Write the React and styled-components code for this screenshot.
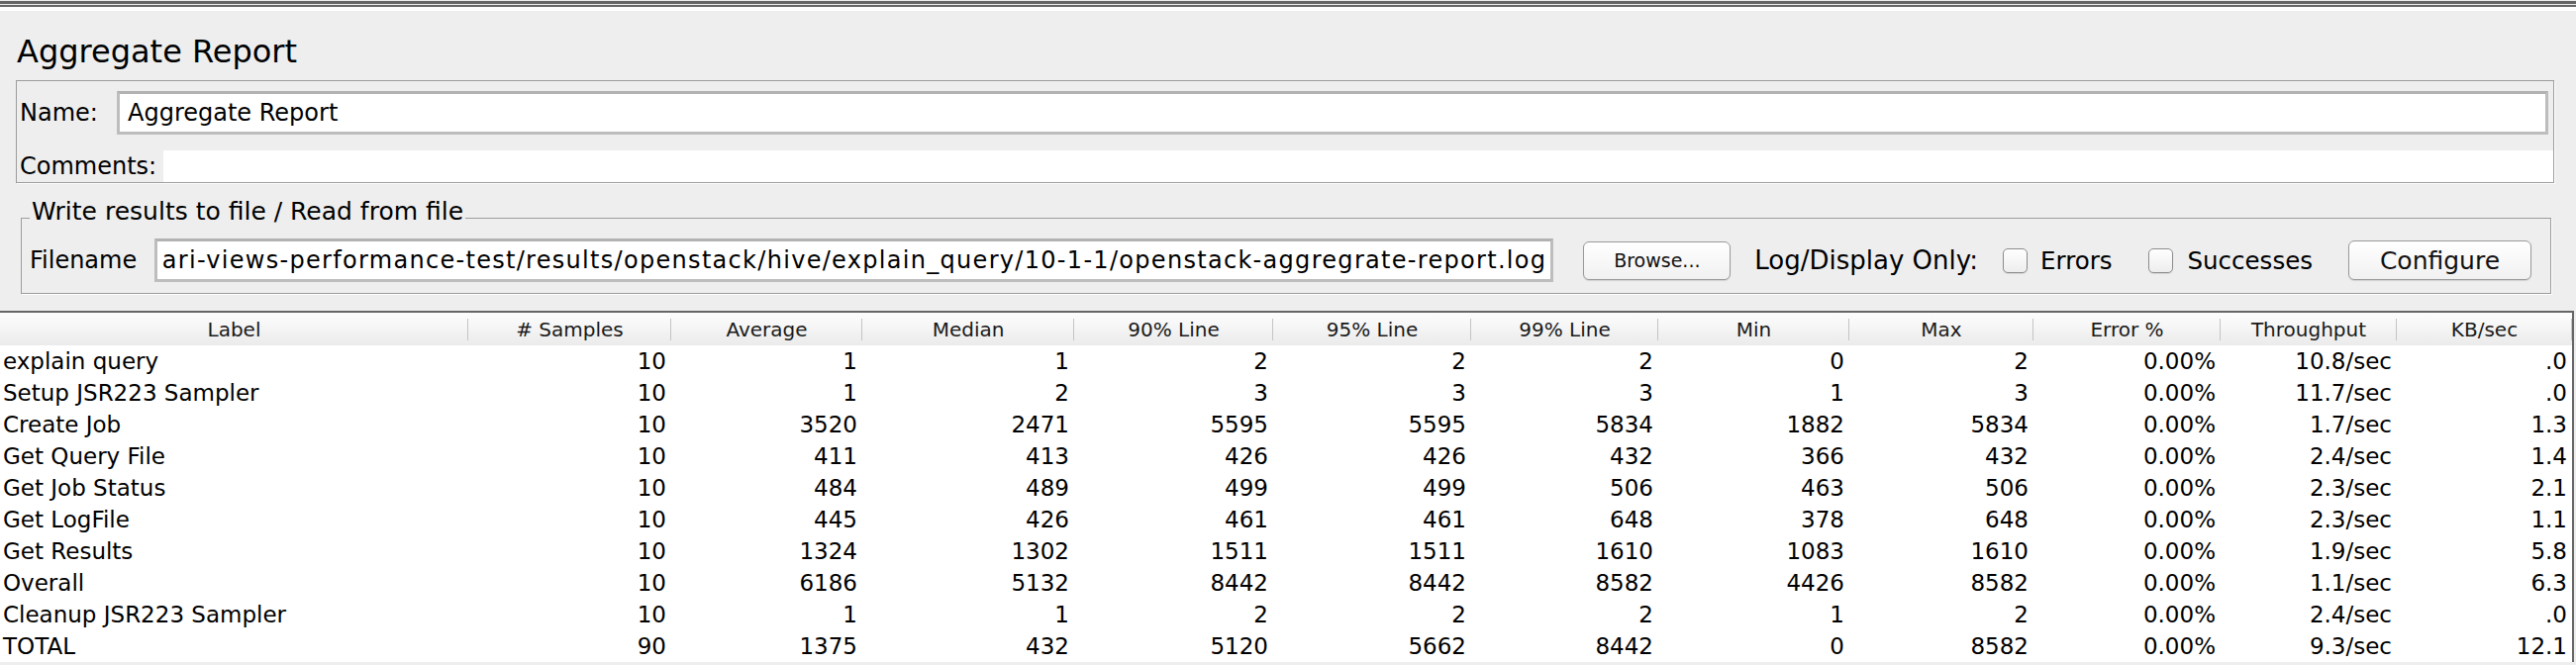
import styled, { createGlobalStyle } from 'styled-components'

const Global = createGlobalStyle`
  html, body {
    margin: 0;
    padding: 0;
    background: #eeeeee;
    overflow: hidden;
  }
  body {
    font-family: "DejaVu Sans", "Liberation Sans", sans-serif;
    color: #000;
  }
`

const Window = styled.div`
  width: 2602px;
  height: 672px;
  padding-top: 1px;
  box-sizing: border-box;
  overflow: hidden;
`

const TopRule = styled.div`
  height: 1px;
  border-top: 3px solid #666666;
  border-bottom: 2px solid #666666;
  box-shadow: 0 4px 0 #ffffff;
`

const Title = styled.h1`
  margin: 27px 0 0 17px;
  font-size: 32px;
  line-height: 37px;
  font-weight: normal;
`

const NamePanel = styled.div`
  margin: 10px 22px 0 16px;
  padding: 10px 0 0 3px;
  border: 1px solid #9d9d9d;
  box-shadow: 1px 1px 0 #ffffff;
`

const Row = styled.div`
  display: flex;
  align-items: center;
  height: ${(p) => p.$height || 44}px;
  margin-bottom: ${(p) => p.$gap || 0}px;
  padding-right: ${(p) => p.$right || 0}px;
`

const FieldLabel = styled.span`
  flex: none;
  width: ${(p) => (p.$width ? `${p.$width}px` : 'auto')};
  font-size: ${(p) => p.$size || 24}px;
  margin-left: ${(p) => p.$left || 0}px;
  white-space: nowrap;
`

const TextField = styled.div`
  flex: 1;
  min-width: 0;
  height: 44px;
  box-sizing: border-box;
  display: flex;
  align-items: center;
  justify-content: ${(p) => (p.$end ? 'flex-end' : 'flex-start')};
  overflow: hidden;
  padding: 0 ${(p) => (p.$end ? 4 : 8)}px;
  background: #fff;
  border: 3px solid #bdbdbd;
  border-top-color: #b2b2b2;
  font-size: 24px;
  letter-spacing: ${(p) => p.$spacing || 0}px;
  white-space: nowrap;
`

const CommentArea = styled.div`
  flex: 1;
  align-self: stretch;
  background: #fff;
`

const FilePanel = styled.fieldset`
  margin: 14px 25px 0 21px;
  padding: 0 19px 11px 8px;
  border: 1px solid #9d9d9d;
  box-shadow: 1px 1px 0 #ffffff;
  min-inline-size: 0;
`

const Legend = styled.legend`
  padding: 0 2px 13px;
  font-size: 25px;
  line-height: 29px;
`

const Button = styled.button`
  flex: none;
  width: ${(p) => p.$width}px;
  height: ${(p) => p.$height}px;
  margin-left: ${(p) => p.$left}px;
  padding: 0;
  border: 1px solid #9a9a9a;
  border-radius: 6px;
  background: linear-gradient(#ffffff, #f1f1f1);
  box-shadow: 0 1px 1px rgba(0, 0, 0, 0.12);
  font-family: "DejaVu Sans", sans-serif;
  font-size: ${(p) => p.$size}px;
  color: #111;
`

const Check = styled.span`
  flex: none;
  width: 25px;
  height: 25px;
  box-sizing: border-box;
  margin-left: ${(p) => p.$left}px;
  margin-right: ${(p) => p.$gap}px;
  border: 1px solid #8c8c8c;
  border-radius: 5px;
  background: linear-gradient(#ffffff, #ededed);
  box-shadow: 0 1px 1px rgba(0, 0, 0, 0.1);
`

const TableWrap = styled.div`
  width: 2600px;
  margin-top: 17px;
  border-top: 2px solid #666666;
  border-right: 2px solid #666666;
  box-sizing: border-box;
  background: #fff;
`

const COLS = '473px 205px 193px 214px 201px 200px 189px 193px 186px 189px 178px 177px'

const HeadRow = styled.div`
  display: grid;
  grid-template-columns: ${COLS};
  height: 33px;
  background: linear-gradient(#fdfdfd, #ebebeb);
`

const HeadCell = styled.div`
  display: flex;
  align-items: center;
  justify-content: center;
  font-size: 20px;
  color: #1a1a1a;
  white-space: nowrap;
  background: linear-gradient(#c4c4c4, #c4c4c4) no-repeat right center / 1px 22px;
`

const DataRow = styled.div`
  display: grid;
  grid-template-columns: ${COLS};
  height: 32px;
  background: #fff;
`

const Cell = styled.div`
  display: flex;
  align-items: center;
  justify-content: ${(p) => (p.$left ? 'flex-start' : 'flex-end')};
  padding: ${(p) => (p.$left ? '0 0 0 3px' : '0 5px 0 0')};
  font-size: 23px;
  white-space: nowrap;
  overflow: hidden;
`

const headers = ['Label', '# Samples', 'Average', 'Median', '90% Line', '95% Line', '99% Line', 'Min', 'Max', 'Error %', 'Throughput', 'KB/sec']

const rows = [
  ['explain query', '10', '1', '1', '2', '2', '2', '0', '2', '0.00%', '10.8/sec', '.0'],
  ['Setup JSR223 Sampler', '10', '1', '2', '3', '3', '3', '1', '3', '0.00%', '11.7/sec', '.0'],
  ['Create Job', '10', '3520', '2471', '5595', '5595', '5834', '1882', '5834', '0.00%', '1.7/sec', '1.3'],
  ['Get Query File', '10', '411', '413', '426', '426', '432', '366', '432', '0.00%', '2.4/sec', '1.4'],
  ['Get Job Status', '10', '484', '489', '499', '499', '506', '463', '506', '0.00%', '2.3/sec', '2.1'],
  ['Get LogFile', '10', '445', '426', '461', '461', '648', '378', '648', '0.00%', '2.3/sec', '1.1'],
  ['Get Results', '10', '1324', '1302', '1511', '1511', '1610', '1083', '1610', '0.00%', '1.9/sec', '5.8'],
  ['Overall', '10', '6186', '5132', '8442', '8442', '8582', '4426', '8582', '0.00%', '1.1/sec', '6.3'],
  ['Cleanup JSR223 Sampler', '10', '1', '1', '2', '2', '2', '1', '2', '0.00%', '2.4/sec', '.0'],
  ['TOTAL', '90', '1375', '432', '5120', '5662', '8442', '0', '8582', '0.00%', '9.3/sec', '12.1'],
]

// the field is scrolled to the end, so the start of the path is cut off
const filePath = 'ari-views-performance-test/results/openstack/hive/explain_query/10-1-1/openstack-aggregrate-report.log'

export default function App() {
  return (
    <Window>
      <Global />
      <TopRule />
      <Title>Aggregate Report</Title>

      <NamePanel>
        <Row $gap={16} $right={5}>
          <FieldLabel $width={98}>Name:</FieldLabel>
          <TextField>Aggregate Report</TextField>
        </Row>
        <Row $height={32}>
          <FieldLabel $width={145}>Comments:</FieldLabel>
          <CommentArea />
        </Row>
      </NamePanel>

      <FilePanel>
        <Legend>Write results to file / Read from file</Legend>
        <Row>
          <FieldLabel $width={126}>Filename</FieldLabel>
          <TextField $end $spacing={1.3}>{filePath}</TextField>
          <Button $width={149} $height={39} $left={30} $size={19}>Browse...</Button>
          <FieldLabel $size={26} $left={24}>Log/Display Only:</FieldLabel>
          <Check $left={25} $gap={13} />
          <FieldLabel $size={24.5}>Errors</FieldLabel>
          <Check $left={36} $gap={15} />
          <FieldLabel $size={24.5}>Successes</FieldLabel>
          <Button $width={185} $height={40} $left={36} $size={25}>Configure</Button>
        </Row>
      </FilePanel>

      <TableWrap>
        <HeadRow>
          {headers.map((h) => (
            <HeadCell key={h}>{h}</HeadCell>
          ))}
        </HeadRow>
        {rows.map((r) => (
          <DataRow key={r[0]}>
            {r.map((v, i) => (
              <Cell key={i} $left={i === 0}>{v}</Cell>
            ))}
          </DataRow>
        ))}
      </TableWrap>
    </Window>
  )
}
